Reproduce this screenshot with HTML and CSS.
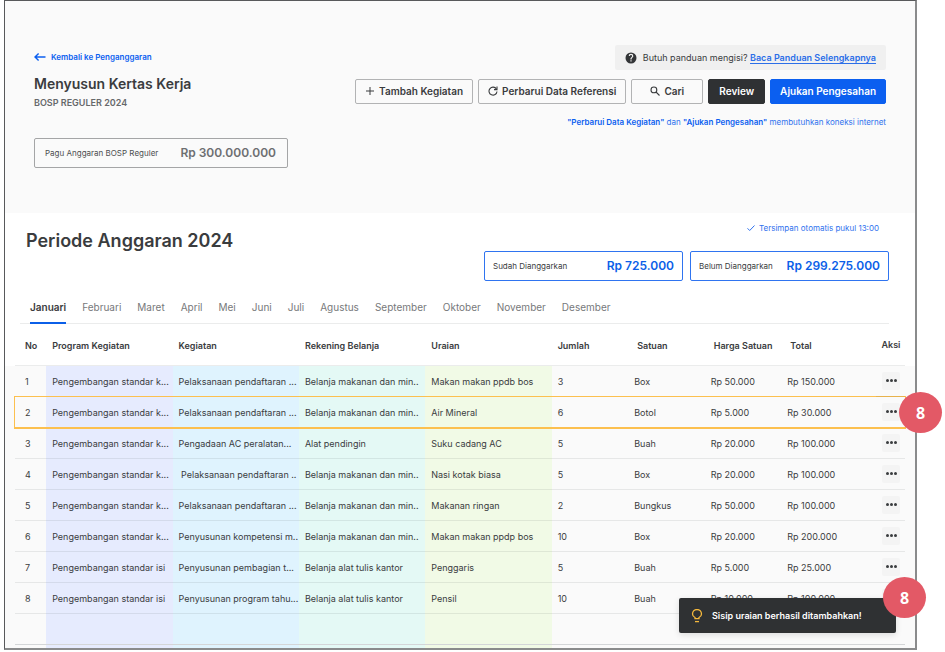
FILE: index.html
```html
<!DOCTYPE html>
<html lang="id">
<head>
<meta charset="utf-8">
<title>Menyusun Kertas Kerja</title>
<link rel="stylesheet" href="styles.css">
</head>
<body>
<main class="frame">
  <header class="top">
    <div class="top-left">
      <a class="back" href="#"><svg width="12" height="10" viewBox="0 0 12 10" fill="none" stroke="currentColor" stroke-width="1.4"><path d="M11.5 5H1M4.6 1.4 1 5l3.6 3.6"/></svg>Kembali ke Penganggaran</a>
      <h1>Menyusun Kertas Kerja</h1>
      <p class="sub">BOSP REGULER 2024</p>
      <div class="amount amount-gray"><span>Pagu Anggaran BOSP Reguler</span><strong>Rp 300.000.000</strong></div>
    </div>
    <div class="top-right">
      <p class="help"><svg width="12" height="12" viewBox="0 0 24 24" fill="#333537"><path d="M12 1a11 11 0 1 0 0 22 11 11 0 0 0 0-22zm1.2 18h-2.4v-2.4h2.4zm2.4-8.6-1.1 1.1c-.9.9-1.3 1.6-1.3 3.3h-2.4v-.6c0-1.3.5-2.4 1.4-3.3l1.4-1.4c.4-.4.6-.9.6-1.5a2.2 2.2 0 0 0-4.4 0H7.400a4.600 4.600 0 0 1 9.200 0c0 1-.4 1.800-1 2.400z"/></svg><span>Butuh panduan mengisi? <a href="#">Baca Panduan Selengkapnya</a></span></p>
      <div class="actions">
        <button class="btn" type="button"><svg width="10" height="10" viewBox="0 0 10 10" fill="none" stroke="currentColor"><path d="M5 1v8M1 5h8"/></svg>Tambah Kegiatan</button>
        <button class="btn" type="button"><svg width="10" height="10" viewBox="0 0 10 10" fill="none" stroke="currentColor" stroke-width="1.1"><path d="M8.400 3A4 4 0 1 0 9 5.500"/><path d="M9 .6v3H6"/></svg>Perbarui Data Referensi</button>
        <button class="btn btn-search" type="button"><svg width="10" height="10" viewBox="0 0 10 10" fill="none" stroke="currentColor" stroke-width="1.1"><circle cx="3.900" cy="3.900" r="2.900"/><path d="m6 6 3.500 3.500"/></svg>Cari</button>
        <button class="btn btn-dark" type="button">Review</button>
        <button class="btn btn-blue" type="button">Ajukan Pengesahan</button>
      </div>
      <p class="note"><b>"Perbarui Data Kegiatan"</b> dan <b>"Ajukan Pengesahan"</b> membutuhkan koneksi internet</p>
    </div>
  </header>

  <section class="period">
    <h2>Periode Anggaran 2024</h2>
    <div class="status">
      <p class="saved"><svg width="8" height="8" viewBox="0 0 8 8" fill="none" stroke="currentColor"><path d="m.5 4.300 2.200 2.200L7.500 1.500"/></svg>Tersimpan otomatis pukul 13:00</p>
      <div class="totals">
        <div class="amount amount-blue"><span>Sudah Dianggarkan</span><strong>Rp 725.000</strong></div>
        <div class="amount amount-blue"><span>Belum Dianggarkan</span><strong>Rp 299.275.000</strong></div>
      </div>
    </div>
  </section>

  <nav class="tabs">
    <a class="active" href="#">Januari</a><a href="#">Februari</a><a href="#">Maret</a><a href="#">April</a><a href="#">Mei</a><a href="#">Juni</a><a href="#">Juli</a><a href="#">Agustus</a><a href="#">September</a><a href="#">Oktober</a><a href="#">November</a><a href="#">Desember</a>
  </nav>

  <div class="sheet">
    <table>
      <colgroup><col class="c-no"><col class="c-program"><col class="c-kegiatan"><col class="c-rekening"><col class="c-uraian"><col class="c-num"><col class="c-num"><col class="c-num"><col class="c-total"><col class="c-aksi"></colgroup>
      <thead>
        <tr><th>No</th><th>Program Kegiatan</th><th>Kegiatan</th><th>Rekening Belanja</th><th>Uraian</th><th>Jumlah</th><th class="shift">Satuan</th><th class="shift">Harga Satuan</th><th class="shift">Total</th><th>Aksi</th></tr>
      </thead>
      <tbody>
        <tr><td>1</td><td>Pengembangan standar k...</td><td>Pelaksanaan pendaftaran ...</td><td>Belanja makanan dan min..</td><td>Makan makan ppdb bos</td><td>3</td><td>Box</td><td>Rp 50.000</td><td>Rp 150.000</td><td><button class="more" type="button" aria-label="Aksi"><i></i><i></i><i></i></button></td></tr>
        <tr class="selected"><td>2</td><td>Pengembangan standar k...</td><td>Pelaksanaan pendaftaran ...</td><td>Belanja makanan dan min..</td><td>Air Mineral</td><td>6</td><td>Botol</td><td>Rp 5.000</td><td>Rp 30.000</td><td><button class="more" type="button" aria-label="Aksi"><i></i><i></i><i></i></button><span class="badge badge-row">8</span></td></tr>
        <tr><td>3</td><td>Pengembangan standar k...</td><td>Pengadaan AC peralatan...</td><td>Alat pendingin</td><td>Suku cadang AC</td><td>5</td><td>Buah</td><td>Rp 20.000</td><td>Rp 100.000</td><td><button class="more" type="button" aria-label="Aksi"><i></i><i></i><i></i></button></td></tr>
        <tr><td>4</td><td>Pengembangan standar k...</td><td>&nbsp;Pelaksanaan pendaftaran ..</td><td>Belanja makanan dan min..</td><td>Nasi kotak biasa</td><td>5</td><td>Box</td><td>Rp 20.000</td><td>Rp 100.000</td><td><button class="more" type="button" aria-label="Aksi"><i></i><i></i><i></i></button></td></tr>
        <tr><td>5</td><td>Pengembangan standar k...</td><td>Pelaksanaan pendaftaran ...</td><td>Belanja makanan dan min..</td><td>Makanan ringan</td><td>2</td><td>Bungkus</td><td>Rp 50.000</td><td>Rp 100.000</td><td><button class="more" type="button" aria-label="Aksi"><i></i><i></i><i></i></button></td></tr>
        <tr><td>6</td><td>Pengembangan standar k...</td><td>Penyusunan kompetensi m..</td><td>Belanja makanan dan min..</td><td>Makan makan ppdp bos</td><td>10</td><td>Box</td><td>Rp 20.000</td><td>Rp 200.000</td><td><button class="more" type="button" aria-label="Aksi"><i></i><i></i><i></i></button></td></tr>
        <tr><td>7</td><td>Pengembangan standar isi</td><td>Penyusunan pembagian t...</td><td>Belanja alat tulis kantor</td><td>Penggaris</td><td>5</td><td>Buah</td><td>Rp 5.000</td><td>Rp 25.000</td><td><button class="more" type="button" aria-label="Aksi"><i></i><i></i><i></i></button></td></tr>
        <tr><td>8</td><td>Pengembangan standar isi</td><td>Penyusunan program tahu...</td><td>Belanja alat tulis kantor</td><td>Pensil</td><td>10</td><td>Buah</td><td>Rp 10.000</td><td>Rp 100.000</td><td><button class="more" type="button" aria-label="Aksi"><i></i><i></i><i></i></button></td></tr>
        <tr class="blank"><td></td><td></td><td></td><td></td><td></td><td></td><td></td><td></td><td></td><td></td></tr>
        <tr class="rest"><td></td><td></td><td></td><td></td><td></td><td></td><td></td><td></td><td></td><td></td></tr>
      </tbody>
    </table>
  </div>

  <div class="toast" role="status">
    <svg width="12" height="14" viewBox="0 0 12 14" fill="none" stroke="#f5b83d" stroke-width="1.3"><path d="M4 9.700V8.500C2.500 7.800 1.500 6.600 1.500 5a4.500 4.500 0 0 1 9 0c0 1.600-1 2.800-2.500 3.500v1.200z"/><path d="M4 12.600h4"/></svg>
    <span>Sisip uraian berhasil ditambahkan!</span>
    <span class="badge badge-toast">8</span>
  </div>
</main>
</body>
</html>
```
FILE: styles.css
```css
* { box-sizing: border-box; }

body {
  margin: 0;
  background: #fff;
  color: #3a3c3e;
  font-family: Inter, "Liberation Sans", sans-serif;
  font-size: 9px;
  line-height: 12px;
}

h1, h2, p { margin: 0; }
svg { flex: none; }
a { text-decoration: none; }

.frame {
  position: relative;
  margin: 0 28px 0 4px;
  border: 1px solid #58595b;
  border-right: 2px solid #8a8b8c;
  border-bottom: 2px solid #8a8b8c;
}

.top {
  display: flex;
  justify-content: space-between;
  padding: 44px 29px 45px;
  background: #fafafa;
}
.top-left { padding-top: 6px; }
.back {
  display: flex;
  align-items: center;
  gap: 5px;
  color: #0b5ff0;
  font-size: 8px;
  font-weight: 600;
}
h1 {
  margin-top: 12px;
  font-size: 14px;
  font-weight: 600;
  line-height: 18px;
}
.sub {
  margin-top: 4px;
  color: #66686a;
  font-weight: 600;
}

.amount {
  display: flex;
  align-items: center;
  justify-content: space-between;
  height: 30px;
  padding-bottom: 1px;
  border: 1px solid;
  border-radius: 2px;
  font-size: 8px;
}
.amount strong {
  font-size: 12px;
  font-weight: 600;
}
.amount-gray {
  width: 254px;
  margin-top: 29px;
  padding-left: 10px;
  padding-right: 11px;
  border-color: #a4a5a6;
  color: #4c4e50;
}
.amount-gray strong { color: #6d6f71; }
.amount-blue {
  flex: none;
  width: 199px;
  padding-left: 8px;
  padding-right: 8px;
  border-color: #2f74f0;
}
.amount-blue span { color: #3a3c3e; }
.amount-blue strong { color: #0b5fe8; }

.top-right {
  display: flex;
  flex-direction: column;
  align-items: flex-end;
}
.help {
  display: flex;
  align-items: center;
  gap: 6px;
  height: 25px;
  padding: 0 10px;
  border-radius: 2px;
  background: #f0f0f0;
}
.help a {
  color: #2b6ee8;
  font-weight: 600;
  text-decoration: underline;
  text-underline-offset: 2px;
}
.actions {
  display: flex;
  gap: 5px;
  margin-top: 9px;
}
.btn {
  display: flex;
  align-items: center;
  justify-content: center;
  gap: 4px;
  height: 25px;
  padding: 0 9px 1px;
  border: 1px solid #b2b3b4;
  border-radius: 2px;
  background: #fafafa;
  color: #3a3c3e;
  font: 600 10px/12px Inter, "Liberation Sans", sans-serif;
}
.btn-search { width: 72px; }
.btn-dark {
  padding-left: 10px;
  padding-right: 10px;
  border-color: #2f3133;
  background: #2f3133;
  color: #fff;
}
.btn-blue {
  border-color: #0b5ff0;
  background: #0b5ff0;
  color: #fff;
}
.note {
  margin-top: 12px;
  color: #2f72ee;
  font-size: 8px;
}
.note b { color: #0b5ff0; font-weight: 600; }

.period {
  display: flex;
  justify-content: space-between;
  padding: 9px 26px 0 21px;
}
h2 {
  padding-top: 8px;
  font-size: 18px;
  font-weight: 600;
  line-height: 22px;
}
.saved {
  display: flex;
  align-items: center;
  justify-content: flex-end;
  gap: 4px;
  padding-right: 10px;
  color: #2f72ee;
  font-size: 8px;
}
.totals {
  display: flex;
  gap: 7px;
  margin-top: 17px;
}

.tabs {
  display: flex;
  gap: 16px;
  margin: 18px 26px 0 15px;
  padding-left: 10px;
  border-bottom: 1px solid #ebecec;
  font-size: 10px;
}
.tabs a {
  padding: 2px 0 9px;
  margin-bottom: -1px;
  border-bottom: 2px solid transparent;
  color: #77797b;
}
.tabs .active {
  border-bottom-color: #0b5fe8;
  color: #3a3c3e;
  font-weight: 600;
}

.sheet {
  padding: 0 10px;
  background: linear-gradient(#fff 42px, #fafafa 42px);
}
table {
  width: 100%;
  border-collapse: separate;
  border-spacing: 0;
  table-layout: fixed;
}
.c-no { width: 3.5%; }
.c-program { width: 14.2%; background: #e6ebfe; }
.c-kegiatan { width: 14.2%; background: #dff3fe; }
.c-rekening { width: 14.2%; background: #e4f9f5; }
.c-uraian { width: 14.2%; background: #f1fae6; }
.c-num { width: 8.6%; }
.c-total { width: 10.7%; }

th, td {
  padding: 2px 0 0 6px;
  border-bottom: 1px solid rgba(60, 64, 67, 0.1);
  text-align: left;
  white-space: nowrap;
}
th {
  height: 42px;
  background: #fff;
  font-weight: 600;
}
td { height: 31px; }
th:first-child, td:first-child { padding-left: 10px; }
th.shift { padding-left: 9px; }
th:last-child { padding: 0 0 0 5px; }
td:last-child { position: relative; padding-top: 0; }
.selected { outline: 1px solid #fcc04f; }
.selected td { border-bottom-color: #fcc04f; }
.blank td { height: 31px; border-bottom: 1px solid #d4d6d8; }
.rest td { height: 3px; padding: 0; border: 0; }

.more {
  display: flex;
  align-items: center;
  justify-content: center;
  gap: 1px;
  width: 18px;
  height: 18px;
  padding: 0 0 1px;
  border: 0;
  border-radius: 2px;
  background: #f4f4f4;
}
.more i {
  width: 3px;
  height: 3px;
  border-radius: 50%;
  background: #3a3c3e;
}

.badge {
  position: absolute;
  display: flex;
  align-items: center;
  justify-content: center;
  width: 43px;
  height: 41px;
  border-radius: 50%;
  background: #e35966;
  color: #fff;
  font: 700 16px/18px "Noto Sans", sans-serif;
}
.badge-row { top: -5px; right: -37px; z-index: 1; }
.badge-toast { top: -21px; right: -30px; }

.toast {
  position: absolute;
  right: 19px;
  bottom: 15px;
  display: flex;
  align-items: center;
  gap: 9px;
  width: 217px;
  height: 35px;
  padding-left: 12px;
  border-radius: 2px;
  background: #2f3133;
  box-shadow: 0 2px 6px rgba(0, 0, 0, 0.12);
  color: #fff;
  font-weight: 600;
}
```
